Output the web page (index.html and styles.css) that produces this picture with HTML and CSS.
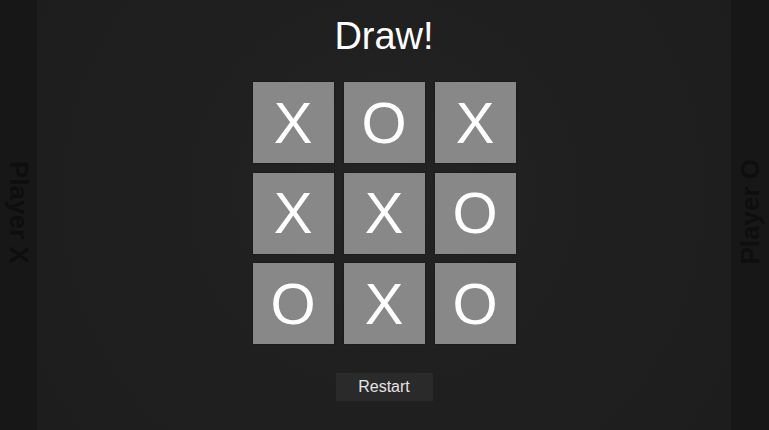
FILE: index.html
```html
<!DOCTYPE html>
<html>
<head>
<meta charset="utf-8">
<link rel="stylesheet" href="styles.css">
</head>
<body>
<div class="app">
  <aside class="side side-left"><span class="side-label">Player X</span></aside>
  <main class="board-area">
    <h1 class="status">Draw!</h1>
    <div class="board">
      <div class="cell">X</div>
      <div class="cell">O</div>
      <div class="cell">X</div>
      <div class="cell">X</div>
      <div class="cell">X</div>
      <div class="cell">O</div>
      <div class="cell">O</div>
      <div class="cell">X</div>
      <div class="cell">O</div>
    </div>
    <button class="restart">Restart</button>
  </main>
  <aside class="side side-right"><span class="side-label">Player O</span></aside>
</div>
</body>
</html>
```
FILE: styles.css
```css
html, body {
  margin: 0;
  padding: 0;
  height: 100%;
  background: #1f1f1f;
  font-family: "Liberation Sans", Arial, sans-serif;
}
.app {
  display: flex;
  height: 430px;
  width: 769px;
}
.side {
  width: 37px;
  flex: none;
  background: #171717;
  display: flex;
  align-items: center;
  justify-content: center;
  padding-bottom: 6px;
  box-sizing: border-box;
}
.side-right {
  width: 38px;
}
.side-label {
  writing-mode: vertical-rl;
  font-size: 26px;
  font-weight: bold;
  color: #0e0e0e;
  white-space: nowrap;
  line-height: 1;
}
.side-right .side-label {
  transform: rotate(180deg);
}
.board-area {
  flex: 1;
  display: flex;
  flex-direction: column;
  align-items: center;
  background: radial-gradient(circle at 50% 45%, #242424 0%, #202020 40%, #1d1d1d 100%);
}
.status {
  margin: 15px 0 0;
  font-size: 38px;
  line-height: 42px;
  font-weight: normal;
  color: #ffffff;
}
.board {
  margin-top: 25px;
  display: grid;
  grid-template-columns: repeat(3, 81px);
  grid-auto-rows: 81px;
  gap: 9.5px 10px;
}
.cell {
  background: #888888;
  color: #ffffff;
  font-size: 58px;
  line-height: 1;
  display: flex;
  align-items: center;
  justify-content: center;
  box-shadow: 0 0 2px rgba(0,0,0,0.4);
}
.restart {
  margin-top: 29px;
  width: 97px;
  height: 28px;
  border: none;
  background: #2a2a2a;
  color: #e4e4e4;
  font-family: "Liberation Sans", Arial, sans-serif;
  font-size: 16px;
  padding: 0;
}
```
